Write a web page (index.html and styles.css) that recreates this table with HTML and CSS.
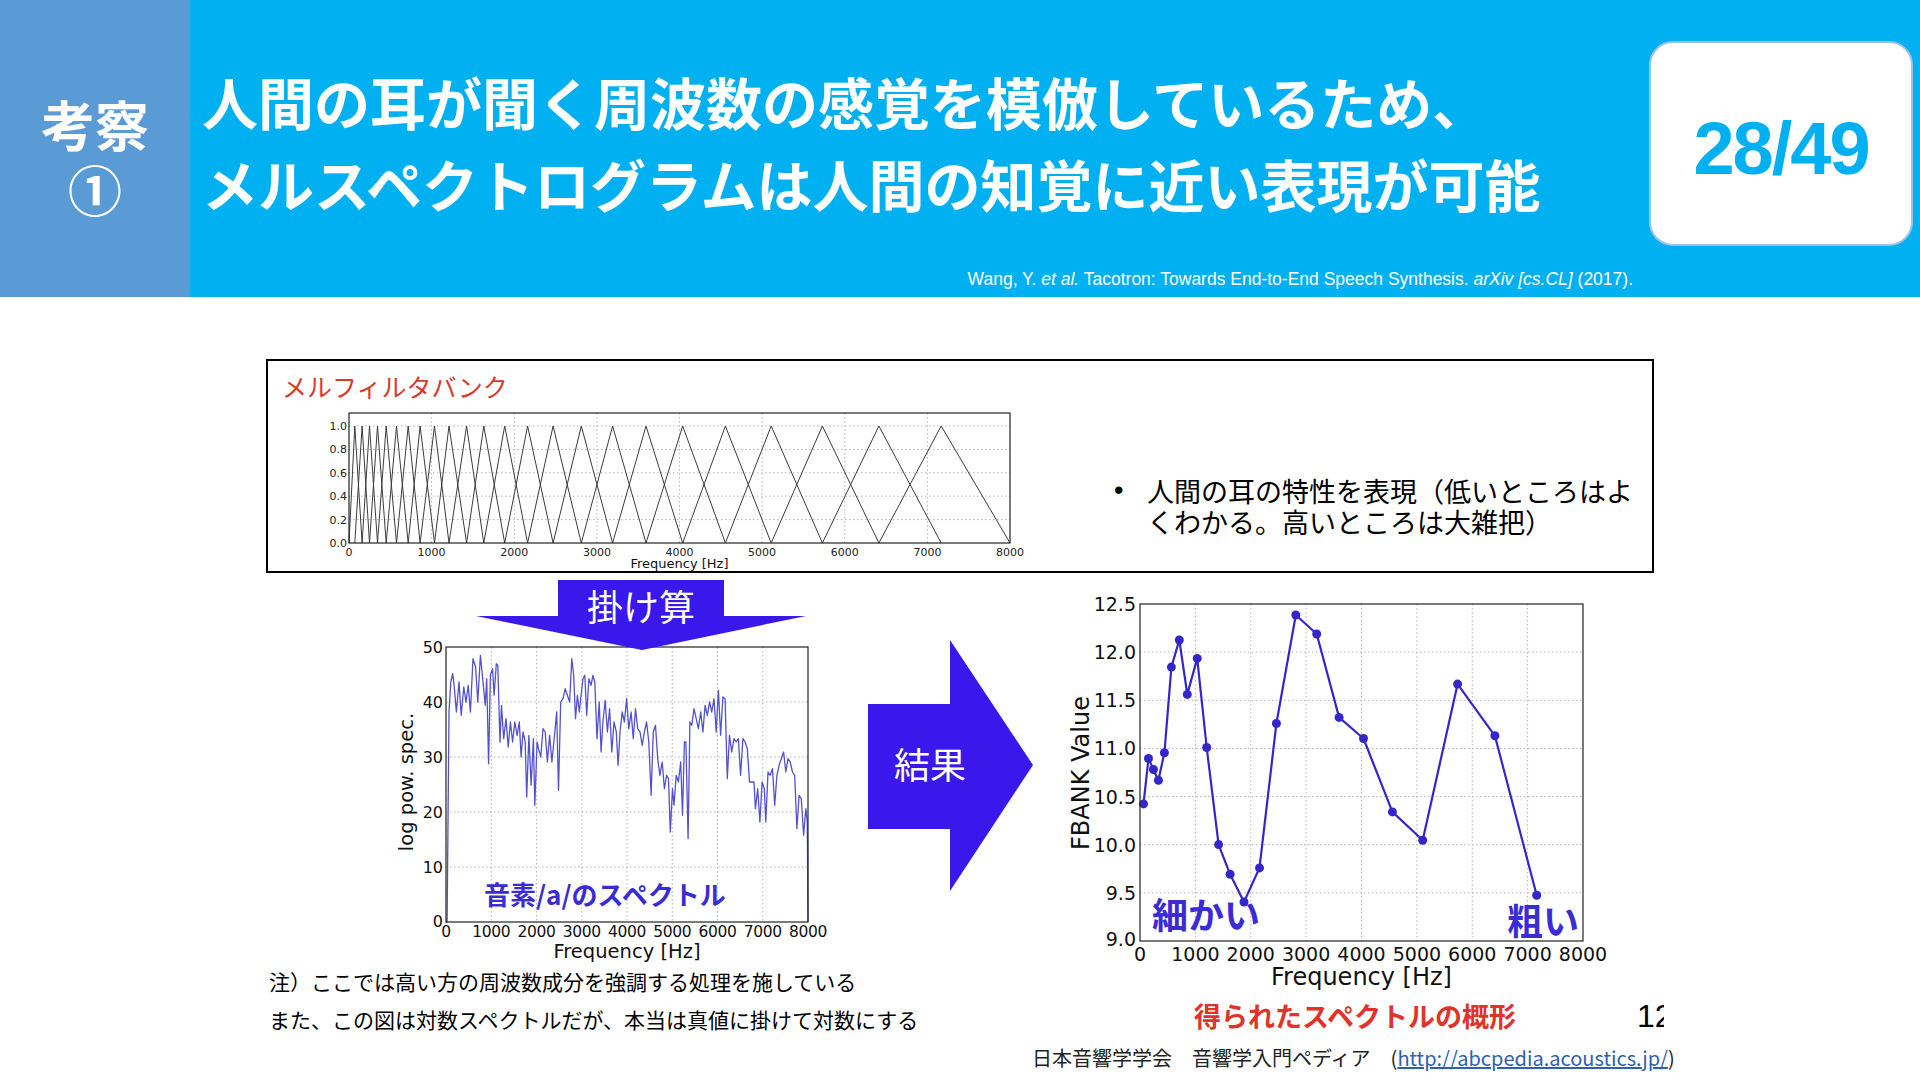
FILE: index.html
```html
<!DOCTYPE html>
<html lang="ja">
<head>
<meta charset="utf-8">
<title>考察① メルスペクトログラム</title>
<link rel="stylesheet" href="styles.css">
</head>
<body>
<div class="slide">
  <header class="header">
    <div class="side">考察<br>①</div>
    <div class="head-main">
      <h1 class="title">人間の耳が聞く周波数の感覚を模倣しているため、<br>メルスペクトログラムは人間の知覚に近い表現が可能</h1>
      <p class="cite">Wang, Y. <i>et al.</i> Tacotron: Towards End-to-End Speech Synthesis. <i>arXiv [cs.CL]</i> (2017).</p>
    </div>
    <div class="page-box">28/49</div>
  </header>

  <main class="content">
    <section class="mel-box">
      <div class="mel-left">
        <div class="mel-title">メルフィルタバンク</div>
        <svg class="chart fb-chart" viewBox="0 0 740 170" width="740" height="170">
          <g class="grid">
            <line x1="131.6" y1="12" x2="131.6" y2="142"/>
            <line x1="214.3" y1="12" x2="214.3" y2="142"/>
            <line x1="296.9" y1="12" x2="296.9" y2="142"/>
            <line x1="379.5" y1="12" x2="379.5" y2="142"/>
            <line x1="462.1" y1="12" x2="462.1" y2="142"/>
            <line x1="544.8" y1="12" x2="544.8" y2="142"/>
            <line x1="627.4" y1="12" x2="627.4" y2="142"/>
            <line x1="49" y1="118.6" x2="710" y2="118.6"/>
            <line x1="49" y1="95.2" x2="710" y2="95.2"/>
            <line x1="49" y1="71.8" x2="710" y2="71.8"/>
            <line x1="49" y1="48.4" x2="710" y2="48.4"/>
            <line x1="49" y1="25" x2="710" y2="25"/>
          </g>
          <g id="fb-lines"></g>
          <rect class="frame" x="49" y="12" width="661" height="130"/>
          <g class="tick-s" text-anchor="end">
            <text x="47" y="146">0.0</text>
            <text x="47" y="122.6">0.2</text>
            <text x="47" y="99.2">0.4</text>
            <text x="47" y="75.8">0.6</text>
            <text x="47" y="52.4">0.8</text>
            <text x="47" y="29">1.0</text>
          </g>
          <g class="tick-s" text-anchor="middle">
            <text x="49" y="155">0</text>
            <text x="131.6" y="155">1000</text>
            <text x="214.3" y="155">2000</text>
            <text x="296.9" y="155">3000</text>
            <text x="379.5" y="155">4000</text>
            <text x="462.1" y="155">5000</text>
            <text x="544.8" y="155">6000</text>
            <text x="627.4" y="155">7000</text>
            <text x="710" y="155">8000</text>
          </g>
          <text class="axis-s" x="379.5" y="167" text-anchor="middle">Frequency [Hz]</text>
        </svg>
      </div>
      <div class="mel-right">
        <ul class="bullets">
          <li><span class="bullet">•</span><span class="bullet-text">人間の耳の特性を表現（低いところはよくわかる。高いところは大雑把）</span></li>
        </ul>
      </div>
    </section>

    <section class="figures">
      <div class="fig-left">
        <svg class="chart spec-chart" viewBox="0 0 450 384" width="450" height="384">
          <g class="grid">
            <line x1="111.25" y1="69" x2="111.25" y2="344"/>
            <line x1="156.5" y1="69" x2="156.5" y2="344"/>
            <line x1="201.75" y1="69" x2="201.75" y2="344"/>
            <line x1="247" y1="69" x2="247" y2="344"/>
            <line x1="292.25" y1="69" x2="292.25" y2="344"/>
            <line x1="337.5" y1="69" x2="337.5" y2="344"/>
            <line x1="382.75" y1="69" x2="382.75" y2="344"/>
            <line x1="66" y1="289" x2="428" y2="289"/>
            <line x1="66" y1="234" x2="428" y2="234"/>
            <line x1="66" y1="179" x2="428" y2="179"/>
            <line x1="66" y1="124" x2="428" y2="124"/>
          </g>
          <g id="spec-line"></g>
          <rect class="frame" x="66" y="69" width="362" height="275"/>
          <g class="tick-m" text-anchor="end">
            <text x="63" y="349">0</text>
            <text x="63" y="295">10</text>
            <text x="63" y="240">20</text>
            <text x="63" y="185">30</text>
            <text x="63" y="130">40</text>
            <text x="63" y="75">50</text>
          </g>
          <g class="tick-m tick-tight" text-anchor="middle">
            <text x="66" y="359">0</text>
            <text x="111.25" y="359">1000</text>
            <text x="156.5" y="359">2000</text>
            <text x="201.75" y="359">3000</text>
            <text x="247" y="359">4000</text>
            <text x="292.25" y="359">5000</text>
            <text x="337.5" y="359">6000</text>
            <text x="382.75" y="359">7000</text>
            <text x="428" y="359">8000</text>
          </g>
          <text class="axis-m" x="247" y="380" text-anchor="middle">Frequency [Hz]</text>
          <text class="axis-m" transform="translate(33 204) rotate(-90)" text-anchor="middle">log pow. spec.</text>
          <text class="plot-note note-m" x="104" y="327">音素/a/のスペクトル</text>
          <polygon class="arrow-shape" points="178,2 344,2 344,38 426,38 262,72 96,38 178,38"/>
          <text class="arrow-text" x="261" y="43" text-anchor="middle">掛け算</text>
        </svg>
        <div class="notes">
          <p>注）ここでは高い方の周波数成分を強調する処理を施している</p>
          <p>また、この図は対数スペクトルだが、本当は真値に掛けて対数にする</p>
        </div>
      </div>

      <svg class="result-arrow" viewBox="0 0 165 251" width="165" height="251">
        <polygon class="arrow-shape" points="0,64 82,64 82,0 165,125 82,251 82,189 0,189"/>
        <text class="arrow-text" x="62" y="139" text-anchor="middle">結果</text>
      </svg>

      <div class="fig-right">
        <svg class="chart fbank-chart" viewBox="0 0 560 409" width="560" height="409">
          <g class="grid">
            <line x1="135.4" y1="14" x2="135.4" y2="351"/>
            <line x1="190.75" y1="14" x2="190.75" y2="351"/>
            <line x1="246.1" y1="14" x2="246.1" y2="351"/>
            <line x1="301.5" y1="14" x2="301.5" y2="351"/>
            <line x1="356.9" y1="14" x2="356.9" y2="351"/>
            <line x1="412.25" y1="14" x2="412.25" y2="351"/>
            <line x1="467.6" y1="14" x2="467.6" y2="351"/>
            <line x1="80" y1="302.9" x2="523" y2="302.9"/>
            <line x1="80" y1="254.7" x2="523" y2="254.7"/>
            <line x1="80" y1="206.6" x2="523" y2="206.6"/>
            <line x1="80" y1="158.4" x2="523" y2="158.4"/>
            <line x1="80" y1="110.3" x2="523" y2="110.3"/>
            <line x1="80" y1="62.1" x2="523" y2="62.1"/>
          </g>
          <g id="fbank-line"></g>
          <rect class="frame" x="80" y="14" width="443" height="337"/>
          <g class="tick-l" text-anchor="end">
            <text x="76" y="356">9.0</text>
            <text x="76" y="309.9">9.5</text>
            <text x="76" y="261.7">10.0</text>
            <text x="76" y="213.6">10.5</text>
            <text x="76" y="165.4">11.0</text>
            <text x="76" y="117.3">11.5</text>
            <text x="76" y="69.1">12.0</text>
            <text x="76" y="21">12.5</text>
          </g>
          <g class="tick-l" text-anchor="middle">
            <text x="80" y="371">0</text>
            <text x="135.4" y="371">1000</text>
            <text x="190.75" y="371">2000</text>
            <text x="246.1" y="371">3000</text>
            <text x="301.5" y="371">4000</text>
            <text x="356.9" y="371">5000</text>
            <text x="412.25" y="371">6000</text>
            <text x="467.6" y="371">7000</text>
            <text x="523" y="371">8000</text>
          </g>
          <text class="axis-l" x="301.5" y="395" text-anchor="middle">Frequency [Hz]</text>
          <text class="axis-l" transform="translate(29 183) rotate(-90)" text-anchor="middle">FBANK Value</text>
          <text class="plot-note note-l" x="92" y="339">細かい</text>
          <text class="plot-note note-l" x="447" y="345">粗い</text>
        </svg>
        <div class="caption-row">
          <span class="caption">得られたスペクトルの概形</span>
          <span class="slide-no">12</span>
        </div>
      </div>
    </section>

    <p class="source">日本音響学学会　音響学入門ペディア　(<a href="#">http://abcpedia.acoustics.jp/</a>)</p>
  </main>
</div>
<script src="script.js"></script>
</body>
</html>
```

FILE: styles.css
```css
* {
  box-sizing: border-box;
}

html,
body {
  margin: 0;
  padding: 0;
}

body {
  width: 1920px;
  height: 1080px;
  overflow: hidden;
  background: #ffffff;
  color: #000000;
  font-family: "Noto Sans CJK JP", "Noto Sans", sans-serif;
}

.slide {
  width: 1920px;
  height: 1080px;
  overflow: hidden;
}

/* ---------- header ---------- */
.header {
  display: flex;
  height: 297px;
  background: #00b0f0;
}

.side {
  width: 190px;
  flex-shrink: 0;
  background: #5b9bd5;
  color: #ffffff;
  font-weight: 700;
  font-size: 54px;
  line-height: 65px;
  text-align: center;
  padding-top: 91px;
}

.head-main {
  flex: 1;
  min-width: 0;
  display: flex;
  flex-direction: column;
}

.title {
  margin: 0;
  padding: 60px 0 0 12px;
  font-size: 56px;
  line-height: 82px;
  font-weight: 700;
  color: #ffffff;
  white-space: nowrap;
}

.cite {
  margin: auto 0 0;
  padding: 0 16px 7px 0;
  text-align: right;
  font-family: "Liberation Sans", Arial, sans-serif;
  font-size: 17.5px;
  line-height: 22px;
  color: #ffffff;
  white-space: nowrap;
}

.page-box {
  flex-shrink: 0;
  width: 264px;
  height: 205px;
  margin: 41px 7px 0 0;
  padding-top: 10px;
  background: #ffffff;
  border: 2px solid #9cc2e5;
  border-radius: 24px;
  display: flex;
  align-items: center;
  justify-content: center;
  font-family: "Liberation Sans", Arial, sans-serif;
  font-weight: 700;
  font-size: 74px;
  letter-spacing: -2px;
  color: #00b0f0;
}

/* ---------- body ---------- */
.content {
  padding: 62px 0 0 266px;
}

.mel-box {
  display: flex;
  width: 1388px;
  height: 214px;
  border: 2px solid #000000;
}

.mel-left {
  width: 770px;
  flex-shrink: 0;
}

.mel-title {
  padding: 10px 0 0 14px;
  font-size: 25px;
  line-height: 30px;
  color: #d83a2c;
}

.chart {
  display: block;
  font-family: "DejaVu Sans", sans-serif;
}

.fb-chart {
  margin-left: 32px;
}

.mel-right {
  align-self: flex-end;
  padding: 0 0 34px 76px;
}

.bullets {
  list-style: none;
  margin: 0;
  padding: 0;
}

.bullets li {
  display: flex;
  font-size: 27px;
  line-height: 31px;
}

.bullet {
  width: 33px;
  flex-shrink: 0;
  font-family: "Liberation Sans", Arial, sans-serif;
}

.bullet-text {
  width: 490px;
}

.figures {
  display: flex;
}

.fig-left {
  width: 602px;
  flex-shrink: 0;
}

.spec-chart {
  margin: 5px 0 0 114px;
}

.notes {
  margin-left: 3px;
  font-size: 21px;
  line-height: 38px;
  white-space: nowrap;
}

.notes p {
  margin: 0;
}

.result-arrow {
  display: block;
  flex-shrink: 0;
  margin-top: 67px;
}

.fig-right {
  width: 604px;
  flex-shrink: 0;
  margin-left: 27px;
}

.fbank-chart {
  margin-top: 17px;
}

.caption-row {
  display: flex;
  justify-content: space-between;
  align-items: center;
  height: 34px;
}

.caption {
  padding-left: 134px;
  font-size: 27px;
  line-height: 34px;
  font-weight: 700;
  color: #e0342a;
  white-space: nowrap;
}

.slide-no {
  width: 27px;
  overflow: hidden;
  white-space: nowrap;
  font-family: "Liberation Sans", Arial, sans-serif;
  font-size: 32px;
  line-height: 34px;
}

.source {
  margin: 7px 0 0;
  padding-left: 766px;
  font-size: 20px;
  line-height: 26px;
  color: #222222;
  white-space: nowrap;
}

.source a {
  color: #2f5fb3;
  text-decoration: underline;
}

/* ---------- chart parts ---------- */
.grid line {
  stroke: #b4b4b4;
  stroke-width: 1;
  stroke-dasharray: 1.5 2.5;
}

.frame {
  fill: none;
  stroke: #222222;
  stroke-width: 1.2;
}

.fb-line {
  fill: none;
  stroke: #3c3c3c;
  stroke-width: 1;
}

.spec-line {
  fill: none;
  stroke: #5451cf;
  stroke-width: 1.3;
  stroke-linejoin: round;
}

.fbank-line {
  fill: none;
  stroke: #3327cc;
  stroke-width: 2.2;
  stroke-linejoin: round;
}

.fbank-dot {
  fill: #3327cc;
}

.tick-s {
  font-size: 11px;
  fill: #222222;
}

.tick-m {
  font-size: 16px;
  fill: #111111;
}

.tick-tight {
  font-size: 15.5px;
  letter-spacing: -0.4px;
}

.tick-l {
  font-size: 19px;
  fill: #111111;
}

.axis-s {
  font-size: 13px;
  fill: #111111;
}

.axis-m {
  font-size: 19.5px;
  fill: #111111;
}

.axis-l {
  font-size: 24px;
  fill: #111111;
}

.plot-note {
  font-family: "Noto Sans CJK JP", sans-serif;
  font-weight: 700;
  fill: #3b2bd6;
}

.note-m {
  font-size: 26px;
}

.note-l {
  font-size: 36px;
}

.arrow-shape {
  fill: #3a18ec;
}

.arrow-text {
  font-family: "Noto Sans CJK JP", sans-serif;
  font-size: 36px;
  fill: #ffffff;
}
```

FILE: script.js
```js
(function () {
  var NS = 'http://www.w3.org/2000/svg';

  function poly(parent, pts, cls) {
    var el = document.createElementNS(NS, 'polyline');
    el.setAttribute('points', pts.map(function (p) {
      return p[0].toFixed(1) + ',' + p[1].toFixed(1);
    }).join(' '));
    el.setAttribute('class', cls);
    parent.appendChild(el);
  }

  /* mel filter bank triangles */
  var peaks = [70, 158, 248, 345, 450, 575, 716, 860, 1035, 1210, 1423, 1632, 1884, 2161,
    2470, 2811, 3190, 3594, 4039, 4555, 5110, 5730, 6413, 7167];
  var fb = document.getElementById('fb-lines');
  function fx(f) { return 49 + f / 8000 * 661; }
  for (var i = 0; i < peaks.length; i++) {
    var l = i === 0 ? 0 : peaks[i - 1];
    var r = i === peaks.length - 1 ? 8000 : peaks[i + 1];
    poly(fb, [[fx(l), 142], [fx(peaks[i]), 25], [fx(r), 142]], 'fb-line');
  }

  /* log power spectrum of /a/ */
  var spec = [[502,1040],[505,1040],[510,410],[515,320],[520,295],[524,330],[530,410],[537,320],[543,420],[550,335],[556,380],[562,330],[568,410],[575,250],[582,275],[588,380],[595,240],[602,320],[608,390],[612,310],[617,565],[622,300],[628,280],[632,360],[638,265],[642,270],[648,500],[652,390],[658,490],[664,430],[670,515],[676,440],[682,500],[688,440],[694,480],[700,440],[705,545],[710,470],[716,500],[720,665],[726,480],[732,630],[738,490],[742,690],[748,500],[752,520],[758,545],[764,460],[770,470],[776,560],[782,480],[788,560],[795,480],[801,410],[806,645],[812,380],[818,370],[824,340],[830,360],[836,380],[842,250],[847,300],[852,430],[857,360],[862,410],[866,370],[872,310],[877,300],[882,420],[888,310],[894,330],[899,300],[904,320],[910,490],[916,380],[921,530],[926,440],[932,375],[938,470],[944,400],[950,530],[956,440],[962,470],[967,570],[972,470],[978,410],[984,440],[990,370],[996,460],[1002,410],[1008,490],[1014,400],[1020,460],[1026,470],[1032,510],[1038,470],[1044,440],[1050,500],[1056,660],[1062,470],[1068,450],[1074,550],[1080,600],[1086,560],[1092,640],[1098,600],[1103,610],[1108,770],[1114,640],[1118,690],[1124,600],[1130,620],[1136,560],[1141,720],[1146,500],[1150,500],[1156,790],[1161,440],[1166,450],[1172,400],[1178,430],[1184,460],[1190,410],[1196,470],[1202,390],[1208,420],[1214,380],[1220,410],[1226,370],[1232,470],[1238,345],[1244,480],[1250,365],[1256,370],[1262,610],[1268,480],[1274,530],[1280,490],[1286,500],[1292,490],[1298,600],[1304,490],[1310,500],[1316,520],[1322,620],[1328,620],[1334,620],[1338,700],[1344,640],[1350,740],[1356,620],[1362,640],[1366,740],[1372,590],[1378,600],[1384,580],[1390,690],[1396,600],[1402,570],[1408,550],[1414,530],[1420,590],[1426,550],[1432,560],[1438,590],[1444,600],[1450,760],[1456,660],[1462,670],[1468,780],[1474,700],[1478,740],[1480,1040]];
  poly(document.getElementById('spec-line'), spec.map(function (p) {
    return [66 + (p[0] - 502) * 0.37014, 69 + (p[1] - 215) / 3];
  }), 'spec-line');

  /* FBANK values */
  var fbank = [[610,686],[620,550],[630,583],[640,615],[652,533],[666,276],[682,195],[698,358],[718,250],[737,517],[761,808],[784,897],[812,980],[843,878],[877,445],[916,120],[958,177],[1003,427],[1052,490],[1110,710],[1171,795],[1241,327],[1316,482],[1400,960]];
  var g = document.getElementById('fbank-line');
  var mapped = fbank.map(function (p) {
    return [80 + (p[0] - 603) * 0.49775, 14 + (p[1] - 87) * 0.33366];
  });
  poly(g, mapped, 'fbank-line');
  mapped.forEach(function (p) {
    var c = document.createElementNS(NS, 'circle');
    c.setAttribute('cx', p[0].toFixed(1));
    c.setAttribute('cy', p[1].toFixed(1));
    c.setAttribute('r', '4.5');
    c.setAttribute('class', 'fbank-dot');
    g.appendChild(c);
  });
})();
```
